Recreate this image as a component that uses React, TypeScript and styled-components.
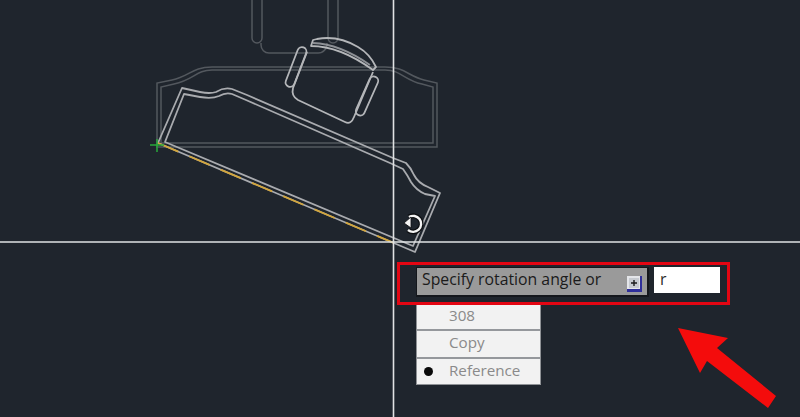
import styled, { createGlobalStyle } from "styled-components";

const GlobalStyle = createGlobalStyle`
  html, body {
    margin: 0;
    padding: 0;
    background: #1f252d;
  }
`;

const Viewport = styled.div`
  position: relative;
  width: 800px;
  height: 417px;
  overflow: hidden;
  background: #1f252d;
  font-family: "Open Sans", "Liberation Sans", sans-serif;
`;

const Drawing = styled.svg`
  position: absolute;
  inset: 0;
  width: 800px;
  height: 417px;
  filter: blur(0.45px);
`;

const Prompt = styled.div`
  position: absolute;
  left: 397px;
  top: 262px;
  width: 333px;
`;

const PromptFrame = styled.div`
  position: relative;
  z-index: 1;
  box-sizing: border-box;
  height: 43px;
  border: 3px solid #e30613;
  display: flex;
  align-items: flex-start;
  padding: 2px 0 0 16px;
  gap: 5px;
`;

const Tooltip = styled.div`
  box-sizing: border-box;
  width: 233px;
  height: 30px;
  background: #9a9a9a;
  border: 1px solid #14171c;
  border-right-width: 2px;
  border-bottom-width: 2px;
  display: flex;
  align-items: center;
  justify-content: space-between;
  padding: 0 5px 5px 5px;
  font-size: 15.8px;
  color: #1b1b1b;
`;

const ExpandIcon = styled.svg`
  width: 15px;
  height: 16px;
  margin-top: 9px;
`;

const ValueInput = styled.div`
  box-sizing: border-box;
  width: 66px;
  height: 26px;
  background: #fff;
  color: #2b2b2b;
  font-size: 15.8px;
  line-height: 24px;
  padding: 0 6px;
`;

const Menu = styled.ul`
  list-style: none;
  box-sizing: border-box;
  width: 125px;
  margin: -3px 0 0 19px;
  padding: 0;
  background: #f2f2f2;
  border: 1px solid #8f9296;
  border-top: none;
`;

const MenuItem = styled.li<{ $selected?: boolean }>`
  position: relative;
  height: 27.4px;
  box-sizing: border-box;
  padding-left: 32px;
  font-size: 15.2px;
  line-height: 23px;
  color: #8a8a8a;
  &:first-child {
    padding-top: 2px;
  }
  & + & {
    border-top: 2px solid #95989c;
  }
  ${(p) =>
    p.$selected &&
    `&::before {
      content: "";
      position: absolute;
      left: 7px;
      top: 8px;
      width: 9px;
      height: 9px;
      border-radius: 50%;
      background: #0a0a0a;
    }`}
`;

const ARROW = "678,328 728,338 717,348 776,396 768,408 707,361 700,373";

export default function App() {
  return (
    <Viewport>
      <GlobalStyle />
      <Drawing viewBox="0 0 800 417">
        {/* faded original position */}
        <g fill="none" stroke="#53585e" strokeWidth="1.5">
          <path d="M252 0V38a5 5 0 0 0 10 0V0M328 0V38a5 5 0 0 0 10 0V0" />
          <path d="M261 43v2a8 8 0 0 0 8 8H318a9 9 0 0 0 9 -10" />
          <path d="M157 147V83L172 80C190 76 192 67 212 67H385C405 67 408 76 424 80L437 83V147Z" />
          <path d="M161 143V87L174 84C194 80 196 70 212 70H385C401 70 404 80 422 84L433 87V143Z" />
        </g>

        {/* rotated chair */}
        <g fill="none" stroke="#b4b6b9" strokeWidth="1.8" strokeLinejoin="round">
          <path d="M307 52L293 88Q291 96 298 100L345 122Q351 125 354 117L373 72" />
          <path d="M313 40L311 46Q340 46 373 70L376 67Q370 54 358 47Q338 35 317 39Z" />
          <path d="M313 43Q340 44 370 65" stroke="#8d9095" />
          <rect x="-4.5" y="-21" width="9" height="42" rx="4.5" transform="translate(296 67) rotate(21)" />
          <rect x="-4.5" y="-21" width="9" height="42" rx="4.5" transform="translate(367 96) rotate(24)" />
        </g>

        {/* rotated desk */}
        <g fill="none" stroke="#a9abaf" strokeWidth="1.8" strokeLinejoin="round">
          <path d="M158 143L182 88L200 92Q210 94 216 92Q224 87 232 89L247 95L393 158L406 163Q411 168 414 175Q418 183 428 187L440 193L415 252Z" />
          <path d="M165 142L184 94L200 97Q212 99 219 96Q226 92 232 94L246 100L390 163L403 169Q408 176 411 182Q416 190 425 194L435 196L413 246Z" />
        </g>
        <path d="M158 143L393 242.7" stroke="#d3a63c" strokeWidth="1.8" strokeDasharray="22 12" fill="none" />

        {/* crosshair */}
        <path d="M393.5 0V417M0 242H800" stroke="#e0e2e3" strokeWidth="1.6" fill="none" />

        {/* base point */}
        <path d="M157 139V152M150 145H164" stroke="#28a83a" strokeWidth="1.5" fill="none" />

        {/* rotate cursor */}
        <g fill="none">
          <path d="M409 217A8 8 0 1 1 408 230" stroke="#0c0e11" strokeWidth="5" />
          <path d="M409 217A8 8 0 1 1 408 230" stroke="#f4f4f4" strokeWidth="2.4" />
          <path d="M404 223L411 217L411 228Z" fill="#f4f4f4" stroke="#0c0e11" strokeWidth="0.8" />
        </g>

        {/* callout arrow */}
        <polygon points={ARROW} fill="#f40c0c" />
      </Drawing>

      <Prompt>
        <PromptFrame>
          <Tooltip>
            Specify rotation angle or
            <ExpandIcon viewBox="0 0 15 16">
              <path d="M0 0H15V16H0Z" fill="#e4e6ea" />
              <path d="M13 0H15V16H0V13H13Z" fill="#2f2f9a" />
              <rect x="2" y="2" width="10" height="10" fill="#c6cad0" />
              <path d="M7 4V10M4 7H10" stroke="#1b1b1b" strokeWidth="1.4" />
            </ExpandIcon>
          </Tooltip>
          <ValueInput>r</ValueInput>
        </PromptFrame>
        <Menu>
          <MenuItem>308</MenuItem>
          <MenuItem>Copy</MenuItem>
          <MenuItem $selected>Reference</MenuItem>
        </Menu>
      </Prompt>
    </Viewport>
  );
}
